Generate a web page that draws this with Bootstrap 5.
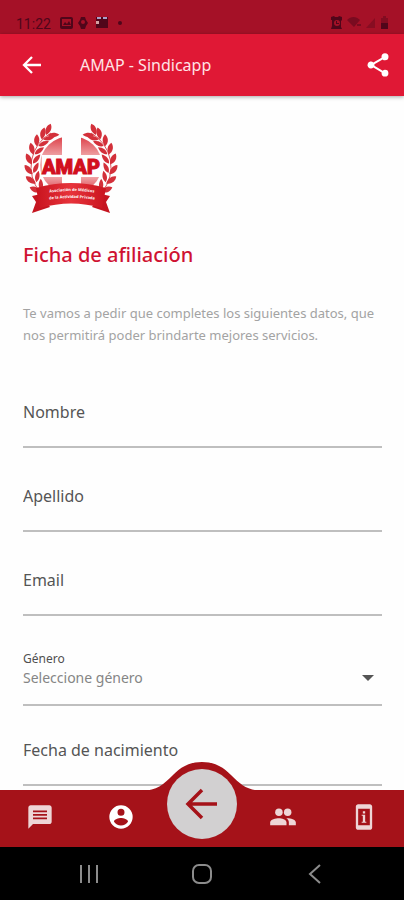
<!DOCTYPE html>
<html lang="es">
<head>
<meta charset="utf-8">
<meta name="viewport" content="width=device-width, initial-scale=1">
<title>AMAP - Sindicapp</title>
<link href="https://cdn.jsdelivr.net/npm/bootstrap@5.3.0/dist/css/bootstrap.min.css" rel="stylesheet">
<style>
body { font-family: "Noto Sans", sans-serif; background: #fefefe; color: #505050; }
svg { display: block; flex: none; }
.screen { height: 100vh; }
.status { background: #a51127; color: #50061a; height: 34px; font: 14px/20px Roboto, sans-serif; }
.appbar { background: #e01835; height: 62px; box-shadow: 0 1px 4px rgba(0,0,0,.35); z-index: 1; padding: 0 12px 0 16px; }
.app-title { font-size: 16px; line-height: 24px; color: #ffe3e6; }
.content { padding: 0 22px 0 23px; }
.heading { color: #cf1232; font-size: 20px; line-height: 30px; }
.intro { font-size: 13px; line-height: 22px; color: #a3a3a3; margin: 32px 0 18px; }
.field { height: 84px; border-bottom: 2px solid #bfbfbf; font-size: 16px; line-height: 24px; }
.field input, .field select { border: 0; outline: 0; padding: 0; background: transparent; width: 100%; height: 24px; color: #505050; }
.field input::placeholder { color: #555; opacity: 1; }
.field select { appearance: none; font-size: 14px; line-height: 20px; height: 20px; color: #858585; }
.text-field { padding-top: 36px; }
.select-field { height: 90px; padding-top: 34px; }
.select-field + .text-field { height: 80px; padding-top: 32px; }
.small-label { font-size: 12px; line-height: 18px; }
.tabs { background: #a51219; height: 57px; }
.tabs button, .keys button { border: 0; padding: 0; background: transparent; display: flex; align-items: center; justify-content: center; }
.tabs button { width: 20%; padding-bottom: 4px; }
.hump { top: -28px; left: 50%; transform: translateX(-50%); }
.tabs .back-round { z-index: 1; margin-top: -29px; height: 86px; padding: 0; }
.keys { background: #000; height: 53px; }
.keys button { width: 28%; }
</style>
<script src="https://cdn.jsdelivr.net/npm/bootstrap@5.3.0/dist/js/bootstrap.bundle.min.js"></script>
</head>
<body>
<div class="screen d-flex flex-column overflow-hidden">
  <div class="status d-flex align-items-end flex-shrink-0 px-3">
    <span>11:22</span>
    <svg class="ms-2 mb-1" width="66" height="14" viewBox="0 0 66 14" fill="#50061a">
      <path fill-rule="evenodd" d="M3 1h9a2 2 0 0 1 2 2v8a2 2 0 0 1-2 2H3a2 2 0 0 1-2-2V3a2 2 0 0 1 2-2zm0 2v7h9V3zM4 9l2-3 2 2 2-3 2 4z"/>
      <path d="M22 1h4l1 3 2 3-2 3-1 3h-4l-1-3-2-3 2-3z"/><circle cx="24" cy="6" r="2" fill="#a51127"/>
      <path d="M37 1h12v11H37z"/><path fill="#a9a0c8" d="M38 1h4v2h-4zM44 1h4v2h-4z"/><path fill="#d4a2a4" d="M37 5h3v3h-3z"/>
      <circle cx="61" cy="7" r="2"/>
    </svg>
    <svg class="ms-auto mb-1" width="58" height="14" viewBox="0 0 58 14" fill="#50061a">
      <path fill-rule="evenodd" d="M1 1l3-1 1 1h3l1-1 3 1v3l-1 1v6l1 2h-2H2l-1 0 1-3V4L1 4zM7 4a3 3 0 1 0 0 6 3 3 0 0 0 0-6zM6 5h1v2h2v1H6z"/>
      <path opacity=".5" d="M17 4c4-4 9-4 13 0l-6 7zM27 8h4v2h-4z"/><path opacity=".35" d="M36 12l9-10v10z"/>
      <path d="M51 7h7v6h-7z"/><path opacity=".4" d="M51 2h2V0h3v2h2v5h-7z"/>
    </svg>
  </div>

  <header class="appbar d-flex align-items-center flex-shrink-0 position-relative">
    <a href="#" class="p-1" aria-label="Volver">
      <svg width="24" height="24" viewBox="0 0 24 24" fill="none" stroke="#fff" stroke-width="2.3"><path d="M21 12H5M12 4l-8 8 8 8"/></svg>
    </a>
    <span class="app-title ms-4 ps-2 flex-grow-1">AMAP - Sindicapp</span>
    <button class="btn p-0 border-0" aria-label="Compartir">
      <svg width="28" height="28" viewBox="0 0 24 24" fill="#fff"><path d="M18 16.08c-.76 0-1.44.3-1.96.77L8.91 12.7c.05-.23.09-.46.09-.7s-.04-.47-.09-.7l7.05-4.11c.54.5 1.25.81 2.04.81a3 3 0 1 0-3-3c0 .24.04.47.09.7L8.04 9.81A3 3 0 1 0 6 15c.79 0 1.5-.31 2.04-.81l7.12 4.16c-.05.21-.08.43-.08.65a2.92 2.92 0 1 0 2.92-2.92z"/></svg>
    </button>
  </header>

  <main class="content flex-grow-1 overflow-hidden">
    <svg class="logo mt-4" width="96" height="96" viewBox="0 -4 96 96" role="img" aria-label="AMAP">
      <defs>
        <linearGradient id="globe" x1="0" y1="0" x2="0" y2="1"><stop offset="0" stop-color="#dc3c45"/><stop offset=".4" stop-color="#f2b4b6"/><stop offset=".7" stop-color="#f0a5a8"/><stop offset="1" stop-color="#d83540"/></linearGradient>
        <linearGradient id="ribbon" x1="0" x2="1"><stop offset="0" stop-color="#c9141f"/><stop offset=".5" stop-color="#e7333b"/><stop offset="1" stop-color="#c9141f"/></linearGradient>
        <g id="pair" fill="#d3303a">
          <path d="M9 44C3 43 1 38 2 34C7 35 9 39 9 44z"/>
          <path d="M10 43C15 41 16 37 16 33C11 35 9 39 10 43z"/>
        </g>
        <g id="branch">
          <path d="M17 66A39 39 0 0 1 28 7" fill="none" stroke="#dd5960"/>
          <use href="#pair" transform="rotate(-34 49 40)"/><use href="#pair" transform="rotate(-20 49 40)"/>
          <use href="#pair" transform="rotate(-6 49 40)"/><use href="#pair" transform="rotate(8 49 40)"/>
          <use href="#pair" transform="rotate(22 49 40)"/><use href="#pair" transform="rotate(35 49 40)"/>
          <use href="#pair" transform="rotate(47 49 40)"/><use href="#pair" transform="rotate(56 49 40)"/>
        </g>
        <path id="arc1" d="M18 70Q48 64 80 70"/>
        <path id="arc2" d="M18 77Q48 71 80 77"/>
      </defs>
      <ellipse cx="48" cy="41" rx="31" ry="29" fill="url(#globe)"/>
      <path fill="#fefefe" d="M39 10h19v52H39zM19 31h60v22H19z"/>
      <g transform="translate(0 2)"><use href="#branch"/><use href="#branch" transform="translate(96 0) scale(-1 1)"/></g>
      <text x="48" y="50" text-anchor="middle" font-family="Roboto, sans-serif" font-weight="900" font-size="20" fill="#d20f1e" stroke="#d20f1e" stroke-width="1">AMAP</text>
      <path fill="#c51520" d="M18 70L9 72l4 6-4 11 18-6zM78 70l9 2-4 6 4 11-18-6z"/>
      <path fill="url(#ribbon)" d="M13 64Q48 54 83 64L79 84Q48 75 17 84z"/>
      <g font-family="Open Sans, sans-serif" font-weight="700" font-size="4" fill="#fff" text-anchor="middle">
        <text><textPath href="#arc1" startOffset="50%">Asociación de Médicos</textPath></text>
        <text><textPath href="#arc2" startOffset="50%">de la Actividad Privada</textPath></text>
      </g>
    </svg>
    <h1 class="heading mt-4 mb-0">Ficha de afiliación</h1>
    <p class="intro">Te vamos a pedir que completes los siguientes datos, que nos permitirá poder brindarte mejores servicios.</p>
    <form>
      <div class="field text-field"><input class="d-block" aria-label="Nombre" placeholder="Nombre"></div>
      <div class="field text-field"><input class="d-block" aria-label="Apellido" placeholder="Apellido"></div>
      <div class="field text-field"><input class="d-block" type="email" aria-label="Email" placeholder="Email"></div>
      <div class="field select-field">
        <label class="small-label d-block" for="genero">Género</label>
        <div class="d-flex align-items-center pe-2">
          <select id="genero"><option>Seleccione género</option></select>
          <svg width="12" height="6" viewBox="0 0 12 6" fill="#555"><path d="M0 0h12L6 6z"/></svg>
        </div>
      </div>
      <div class="field text-field"><input class="d-block" aria-label="Fecha de nacimiento" placeholder="Fecha de nacimiento"></div>
    </form>
  </main>

  <nav class="tabs d-flex flex-shrink-0 position-relative">
    <svg class="hump position-absolute" width="120" height="30" viewBox="0 0 120 30" fill="#a51219"><path d="M0 29C15 28 21 23 31 13C38 6 46 0 60 0C74 0 82 6 89 13C99 23 105 28 120 29V30H0z"/></svg>
    <button aria-label="Mensajes">
      <svg width="28" height="28" viewBox="0 0 24 24" fill="#eed5d6"><path d="M20 2H4c-1.100 0-2 .9-2 2v18l4-4h14c1.100 0 2-.9 2-2V4c0-1.100-.9-2-2-2zM18 14H6v-1.500h12zm0-3H6V9.500h12zm0-3H6V6.500h12z"/></svg>
    </button>
    <button aria-label="Perfil">
      <svg width="28" height="28" viewBox="0 0 24 24" fill="#fff"><path d="M12 2a10 10 0 1 0 0 20 10 10 0 0 0 0-20zm0 3a3 3 0 1 1 0 6 3 3 0 0 1 0-6zm0 14.200c-2.500 0-4.710-1.280-6-3.220.03-1.990 4-3.080 6-3.080s5.970 1.090 6 3.080c-1.290 1.940-3.500 3.220-6 3.220z"/></svg>
    </button>
    <button class="back-round" aria-label="Atrás">
      <svg width="70" height="70" viewBox="0 0 70 70"><circle cx="35" cy="35" r="35" fill="#d2d0d1"/><path d="M50 35H22M35 21L21 35l14 14" fill="none" stroke="#a51219" stroke-width="3.500"/></svg>
    </button>
    <button aria-label="Grupo">
      <svg width="28" height="28" viewBox="0 0 24 24" fill="#eed5d6"><circle cx="8.500" cy="8" r="3.200"/><circle cx="16" cy="8" r="3.200"/><path d="M8.500 13c-2.700 0-7.500 1.200-7.500 3.500V19h14v-2.500C15 14.200 10.800 13 8.500 13zM16 13l-1.200.1c1.400.9 2.200 2 2.200 3.400V19h6v-2.500c0-2.300-4.700-3.500-7-3.500z"/></svg>
    </button>
    <button aria-label="Información">
      <svg width="28" height="28" viewBox="0 0 24 24" fill="#eed5d6"><path fill-rule="evenodd" d="M7 1h10c1.100 0 2 .9 2 2v18c0 1.100-.9 2-2 2H7c-1.100 0-2-.9-2-2V3c0-1.100.9-2 2-2zm0 4v14h10V5zM11 7h2v2h-2zM10 10h3v6h1v1h-4v-1h1v-5h-1z"/></svg>
    </button>
  </nav>

  <div class="keys d-flex justify-content-center flex-shrink-0">
    <button aria-label="Recientes"><svg width="20" height="20" viewBox="0 0 20 20" stroke="#8c8c8c" stroke-width="2"><path d="M2 1v18M10 1v18M18 1v18"/></svg></button>
    <button aria-label="Inicio"><svg width="20" height="20" viewBox="0 0 20 20" fill="none" stroke="#8c8c8c" stroke-width="2"><rect x="1" y="1" width="18" height="18" rx="6"/></svg></button>
    <button aria-label="Retroceder"><svg width="20" height="20" viewBox="0 0 20 20" fill="none" stroke="#8c8c8c" stroke-width="2"><path d="M15 1L5 10l10 9"/></svg></button>
  </div>
</div>
</body>
</html>
